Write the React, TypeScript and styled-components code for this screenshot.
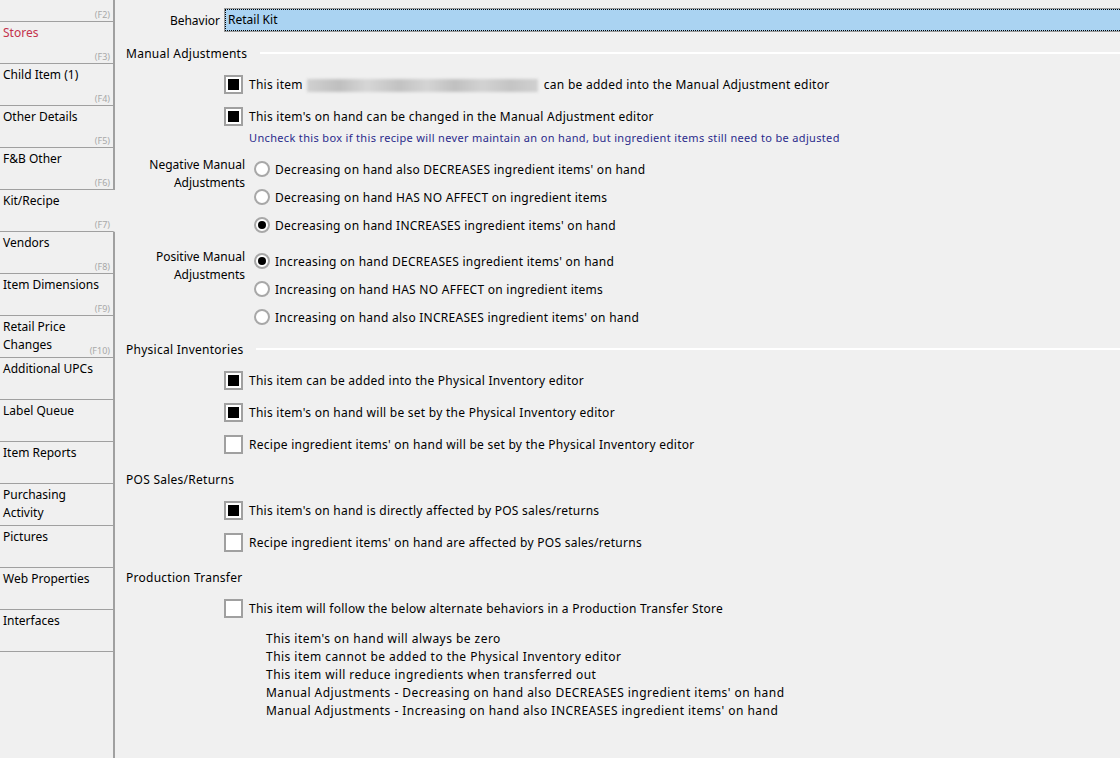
import styled, { createGlobalStyle } from "styled-components";

const GlobalStyle = createGlobalStyle`
    html, body {
        margin: 0;
        padding: 0;
        background: #f0f0f0;
    }
    body {
        font-family: "Noto Sans", "Liberation Sans", sans-serif;
        font-size: 12px;
        color: #000;
    }
`;

const Page = styled.div`
    display: flex;
    height: 758px;
    overflow: hidden;
    background: #f0f0f0;
`;

const Sidebar = styled.div`
    display: flex;
    flex-direction: column;
    width: 115px;
    flex-shrink: 0;
    overflow: hidden;
`;

const TabList = styled.div`
    display: flex;
    flex-direction: column;
    margin-top: -20px;
`;

const Tab = styled.div<{ $selected?: boolean; $red?: boolean }>`
    position: relative;
    box-sizing: border-box;
    height: 42px;
    padding: 2px 3px 0;
    line-height: 18px;
    border-bottom: 1px solid #a0a0a0;
    border-right: 2px solid ${(p) => (p.$selected ? "transparent" : "#a0a0a0")};
    color: ${(p) => (p.$red ? "#c4324c" : "#000")};
`;

const FKey = styled.span`
    position: absolute;
    right: 3px;
    bottom: 0;
    font-size: 9px;
    line-height: 12px;
    color: #a8a8a8;
`;

const Filler = styled.div`
    flex: 1;
    border-right: 2px solid #a0a0a0;
`;

const Main = styled.div`
    flex: 1;
    display: flex;
    flex-direction: column;
    padding-top: 8px;
    overflow: hidden;
    letter-spacing: 0.26px;
`;

const BehaviorRow = styled.div`
    display: flex;
    align-items: center;
    height: 24px;
`;

const FieldLabel = styled.div`
    box-sizing: border-box;
    width: 109px;
    padding-right: 4px;
    text-align: right;
    letter-spacing: 0;
`;

const Input = styled.div`
    flex: 1;
    box-sizing: border-box;
    height: 24px;
    margin-right: -3px;
    padding-left: 3px;
    line-height: 22px;
    letter-spacing: 0;
    background: #aad3f2;
    border: 1px solid #9a9a9a;
    outline: 1px dotted #000;
    outline-offset: -2px;
`;

const SectionHeader = styled.div<{ $top: number }>`
    display: flex;
    align-items: center;
    height: 18px;
    padding-left: 11px;
    margin-top: ${(p) => p.$top}px;
    margin-bottom: 6px;
`;

const Rule = styled.div`
    flex: 1;
    height: 2px;
    margin-left: 13px;
    background: #fff;
`;

const CheckRow = styled.div`
    display: flex;
    align-items: center;
    gap: 6px;
    height: 32px;
    padding-left: 109px;
`;

const Box = styled.span`
    display: flex;
    box-sizing: border-box;
    width: 19px;
    height: 19px;
    padding: 2px;
    border: 2px solid #a0a0a0;
    background: #fff;
`;

const Fill = styled.span`
    width: 11px;
    height: 11px;
    background: #000;
`;

const Blurred = styled.span`
    display: inline-block;
    width: 231px;
    height: 13px;
    margin: 0 6px 0 4px;
    vertical-align: middle;
    background: linear-gradient(
        90deg,
        #d0d0d0,
        #bfbfbf 14%,
        #d6d6d6 26%,
        #c2c2c2 40%,
        #d4d4d4 52%,
        #c0c0c0 64%,
        #d2d2d2 76%,
        #c4c4c4 88%,
        #d0d0d0
    );
    filter: blur(1.5px);
`;

const Hint = styled.div`
    margin-top: -2px;
    padding-left: 134px;
    font-size: 11px;
    line-height: 16px;
    letter-spacing: 0.34px;
    color: #2b2b8c;
`;

const RadioGroup = styled.div<{ $top: number }>`
    display: grid;
    grid-template-columns: 130px 1fr;
    column-gap: 9px;
    margin-top: ${(p) => p.$top}px;
`;

const GroupLabel = styled.div`
    padding-top: 1px;
    text-align: right;
    line-height: 18px;
    letter-spacing: 0;
`;

const RadioList = styled.div`
    display: flex;
    flex-direction: column;
`;

const RadioRow = styled.div`
    display: flex;
    align-items: center;
    gap: 5px;
    height: 28px;
`;

const Circle = styled.span`
    display: flex;
    align-items: center;
    justify-content: center;
    box-sizing: border-box;
    width: 16px;
    height: 16px;
    border-radius: 50%;
    border: 2px solid #a8a8a8;
    background: #fff;
`;

const Dot = styled.span`
    width: 8px;
    height: 8px;
    border-radius: 50%;
    background: #000;
`;

const Notes = styled.div`
    margin-top: 6px;
    padding-left: 151px;
    line-height: 18px;
    letter-spacing: 0.46px;
`;

const tabs = [
    { name: "", key: "(F2)" },
    { name: "Stores", key: "(F3)", red: true },
    { name: "Child Item (1)", key: "(F4)" },
    { name: "Other Details", key: "(F5)" },
    { name: "F&B Other", key: "(F6)" },
    { name: "Kit/Recipe", key: "(F7)", selected: true },
    { name: "Vendors", key: "(F8)" },
    { name: "Item Dimensions", key: "(F9)" },
    { name: "Retail Price Changes", key: "(F10)" },
    { name: "Additional UPCs" },
    { name: "Label Queue" },
    { name: "Item Reports" },
    { name: "Purchasing Activity" },
    { name: "Pictures" },
    { name: "Web Properties" },
    { name: "Interfaces" },
];

function Check({ checked, children }: { checked?: boolean; children: React.ReactNode }) {
    return (
        <CheckRow>
            <Box>{checked && <Fill />}</Box>
            <span>{children}</span>
        </CheckRow>
    );
}

function Radio({ checked, children }: { checked?: boolean; children: React.ReactNode }) {
    return (
        <RadioRow>
            <Circle>{checked && <Dot />}</Circle>
            <span>{children}</span>
        </RadioRow>
    );
}

export default function App() {
    return (
        <Page>
            <GlobalStyle />
            <Sidebar>
                <TabList>
                    {tabs.map((t, i) => (
                        <Tab key={i} $selected={t.selected} $red={t.red}>
                            {t.name === "Retail Price Changes" ? (
                                <>Retail Price<br />Changes</>
                            ) : t.name === "Purchasing Activity" ? (
                                <>Purchasing<br />Activity</>
                            ) : (
                                t.name
                            )}
                            {t.key && <FKey>{t.key}</FKey>}
                        </Tab>
                    ))}
                </TabList>
                <Filler />
            </Sidebar>
            <Main>
                <BehaviorRow>
                    <FieldLabel>Behavior</FieldLabel>
                    <Input>Retail Kit</Input>
                </BehaviorRow>

                <SectionHeader $top={12}>
                    Manual Adjustments
                    <Rule />
                </SectionHeader>
                <Check checked>
                    This item<Blurred />can be added into the Manual Adjustment editor
                </Check>
                <Check checked>This item's on hand can be changed in the Manual Adjustment editor</Check>
                <Hint>
                    Uncheck this box if this recipe will never maintain an on hand, but ingredient items still need to be adjusted
                </Hint>

                <RadioGroup $top={9}>
                    <GroupLabel>Negative Manual<br />Adjustments</GroupLabel>
                    <RadioList>
                        <Radio>Decreasing on hand also DECREASES ingredient items' on hand</Radio>
                        <Radio>Decreasing on hand HAS NO AFFECT on ingredient items</Radio>
                        <Radio checked>Decreasing on hand INCREASES ingredient items' on hand</Radio>
                    </RadioList>
                </RadioGroup>
                <RadioGroup $top={8}>
                    <GroupLabel>Positive Manual<br />Adjustments</GroupLabel>
                    <RadioList>
                        <Radio checked>Increasing on hand DECREASES ingredient items' on hand</Radio>
                        <Radio>Increasing on hand HAS NO AFFECT on ingredient items</Radio>
                        <Radio>Increasing on hand also INCREASES ingredient items' on hand</Radio>
                    </RadioList>
                </RadioGroup>

                <SectionHeader $top={9}>
                    Physical Inventories
                    <Rule />
                </SectionHeader>
                <Check checked>This item can be added into the Physical Inventory editor</Check>
                <Check checked>This item's on hand will be set by the Physical Inventory editor</Check>
                <Check>Recipe ingredient items' on hand will be set by the Physical Inventory editor</Check>

                <SectionHeader $top={10}>POS Sales/Returns</SectionHeader>
                <Check checked>This item's on hand is directly affected by POS sales/returns</Check>
                <Check>Recipe ingredient items' on hand are affected by POS sales/returns</Check>

                <SectionHeader $top={10}>Production Transfer</SectionHeader>
                <Check>This item will follow the below alternate behaviors in a Production Transfer Store</Check>
                <Notes>
                    <div>This item's on hand will always be zero</div>
                    <div>This item cannot be added to the Physical Inventory editor</div>
                    <div>This item will reduce ingredients when transferred out</div>
                    <div>Manual Adjustments - Decreasing on hand also DECREASES ingredient items' on hand</div>
                    <div>Manual Adjustments - Increasing on hand also INCREASES ingredient items' on hand</div>
                </Notes>
            </Main>
        </Page>
    );
}
